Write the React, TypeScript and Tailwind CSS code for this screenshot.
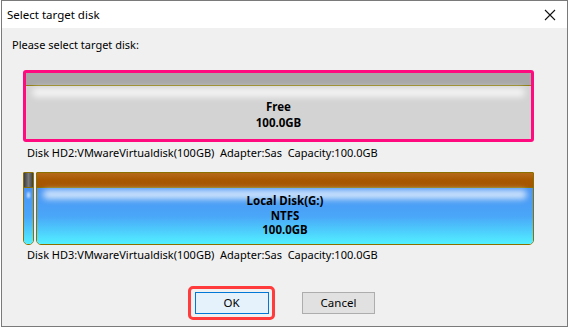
import React from "react";

const font = { fontFamily: '"Noto Sans", "Open Sans", sans-serif' };

function Highlight() {
  return (
    <div className="absolute top-[2px] left-[6px] right-[6px] h-[9px] rounded-full bg-white/75 blur-[3px]" />
  );
}

export default function App() {
  return (
    <div className="w-[570px] h-[329px] bg-white text-black" style={font}>
      <div className="ml-[1px] w-[567px] h-[327px] border border-[#7a7a7a] bg-[#f0f0f0] flex flex-col">
        <div className="h-[27px] bg-white flex items-center justify-between pl-[5px] pr-[11px] shrink-0">
          <span className="text-[11.5px] leading-none">Select target disk</span>
          <svg width="12" height="12" viewBox="0 0 12 12" className="block">
            <path d="M1 1 L11 11 M11 1 L1 11" stroke="#111" strokeWidth="1.1" fill="none" />
          </svg>
        </div>
        <div className="h-[16px] mt-[8px] ml-[10px] flex items-center text-[11px] leading-none">
          Please select target disk:
        </div>

        {/* Disk 1 */}
        <div className="mt-[18px] ml-[21px] w-[511px] h-[72px] border-[3px] border-[#ff0a7f] rounded-[3px] flex flex-col overflow-hidden">
          <div className="h-[13px] bg-[#a8a8a8] border-b border-[#8e7d10] shrink-0" />
          <div className="relative flex-1 bg-[#d3d3d3] flex flex-col items-center justify-center pt-[4px] font-bold text-[11.5px] leading-[16px]">
            <Highlight />
            <span className="relative">Free</span>
            <span className="relative">100.0GB</span>
          </div>
        </div>
        <div className="h-[16px] mt-[2px] ml-[25px] flex items-center text-[11px] leading-none whitespace-pre">
          {"Disk HD2:VMwareVirtualdisk(100GB)  Adapter:Sas  Capacity:100.0GB"}
        </div>

        {/* Disk 2 */}
        <div className="mt-[12px] ml-[21px] w-[511px] h-[73px] flex gap-[2px]">
          <div className="w-[11px] h-full border border-[#8b7000] rounded-b-[5px] rounded-t-[1px] flex flex-col overflow-hidden">
            <div className="h-[15px] bg-linear-to-r from-[#3e3e3e] via-[#7a7a7a] to-[#3e3e3e] border-b border-[#8b7000] shrink-0" />
            <div className="relative flex-1 bg-linear-to-b from-[#4a94f3] via-[#4aa6f8] to-[#52f0ff]">
              <div className="absolute top-[4px] left-[3px] w-[3px] h-[6px] rounded-full bg-white/70 blur-[1px]" />
            </div>
          </div>
          <div className="flex-1 h-full border border-[#8b7000] rounded-b-[5px] rounded-t-[1px] flex flex-col overflow-hidden">
            <div className="h-[15px] bg-linear-to-b from-[#b56a18] via-[#a85800] to-[#a45500] border-b border-[#8b7000] shrink-0" />
            <div className="relative flex-1 bg-linear-to-b from-[#4a94f3] via-[#4aa6f8] to-[#52f0ff] flex flex-col items-center justify-center font-bold text-[11.5px] leading-[14.5px]">
              <Highlight />
              <span className="relative">Local Disk(G:)</span>
              <span className="relative">NTFS</span>
              <span className="relative">100.0GB</span>
            </div>
          </div>
        </div>
        <div className="h-[16px] mt-[1px] ml-[25px] flex items-center text-[11px] leading-none whitespace-pre">
          {"Disk HD3:VMwareVirtualdisk(100GB)  Adapter:Sas  Capacity:100.0GB"}
        </div>

        {/* Buttons */}
        <div className="mt-[24px] ml-[186px] flex items-center gap-[27px]">
          <div className="w-[87px] h-[34px] border-[3px] border-[#ff3b3b] rounded-[5px] flex items-center justify-center">
            <button className="w-[74px] h-[22px] border border-[#0078d7] bg-[#e5f1fb] text-[11.5px] leading-none flex items-center justify-center">
              OK
            </button>
          </div>
          <button className="w-[73px] h-[22px] border border-[#adadad] bg-[#e1e1e1] text-[11.5px] leading-none flex items-center justify-center">
            Cancel
          </button>
        </div>
      </div>
    </div>
  );
}
